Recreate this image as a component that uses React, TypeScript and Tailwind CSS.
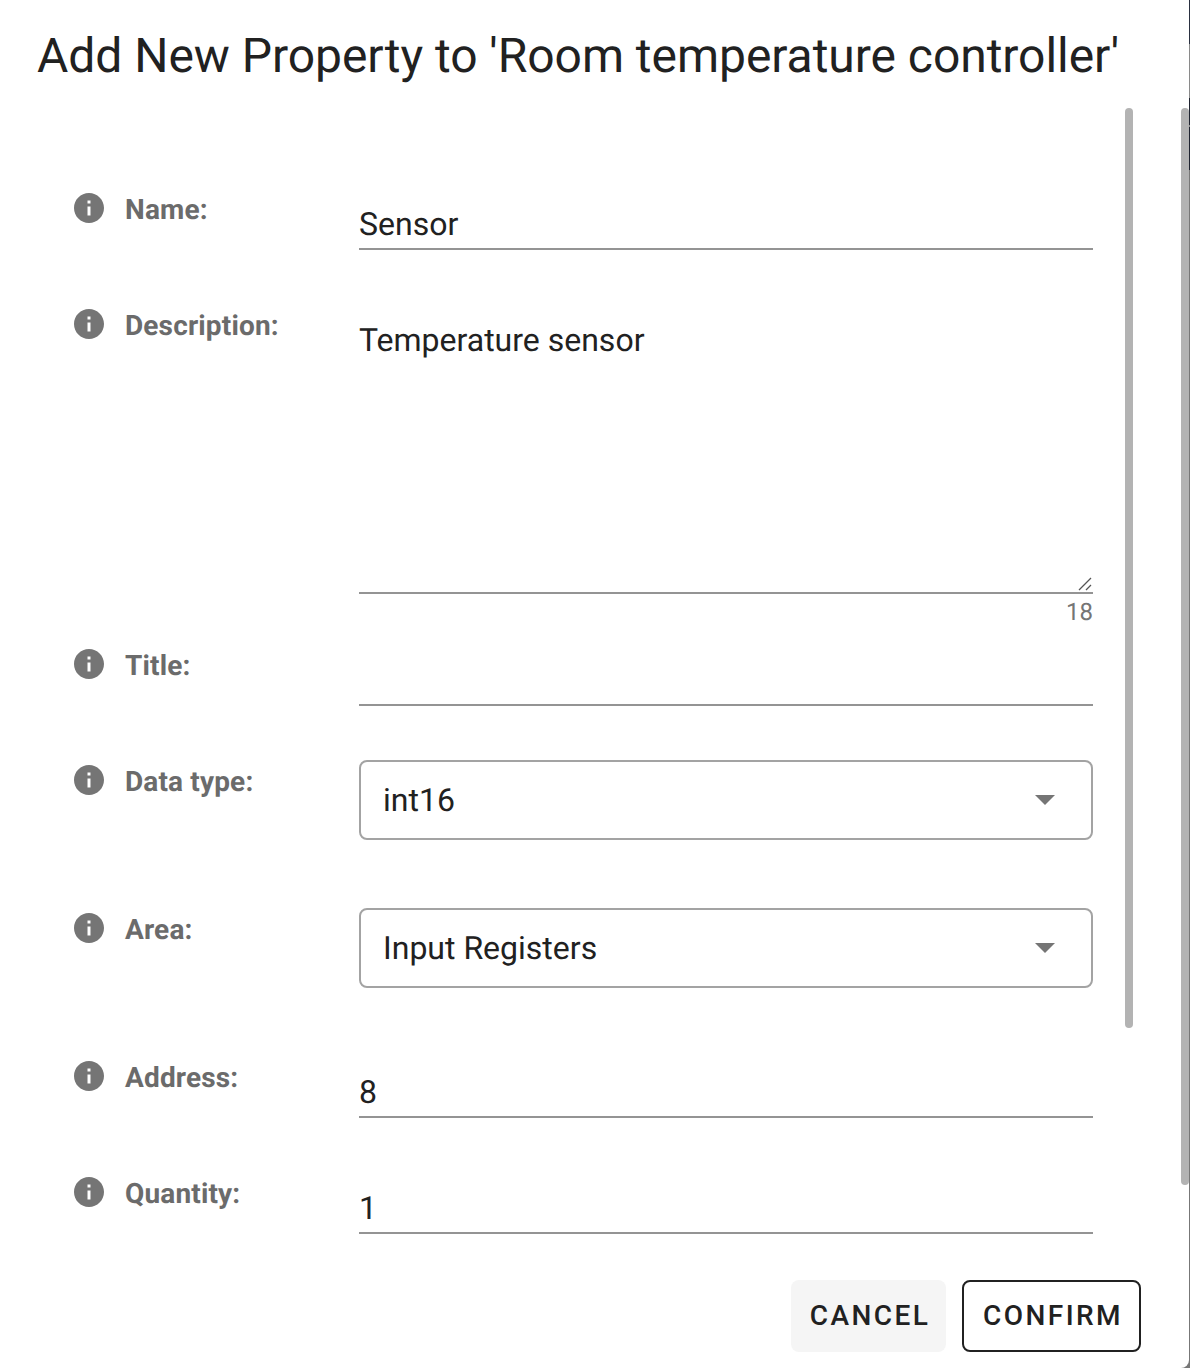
const INFO_PATH =
  'M12 2C6.48 2 2 6.48 2 12s4.48 10 10 10 10-4.48 10-10S17.52 2 12 2zm1 15h-2v-6h2v6zm0-8h-2V7h2v2z'

function InfoIcon() {
  return (
    <svg className="w-9 h-9 shrink-0 fill-[#757575]" viewBox="0 0 24 24" aria-hidden="true">
      <path d={INFO_PATH} />
    </svg>
  )
}

function Label({ text }: { text: string }) {
  return (
    <div className="w-[285px] shrink-0 flex items-start">
      <InfoIcon />
      <span className="ml-[18px] mt-[2px] text-[28px] leading-9 font-bold text-[#6b6b6b] tracking-[0.15px]">{text}</span>
    </div>
  )
}

function TextField({ value }: { value?: string }) {
  return (
    <div className="w-[734px] h-[56px] border-b-2 border-[#949494] flex items-end pb-[4px] text-[32px] leading-[40px] text-[#212121]">
      {value}
    </div>
  )
}

function SelectField({ value }: { value: string }) {
  return (
    <div className="w-[734px] h-[80px] border-2 border-[#a3a3a3] rounded-lg flex items-center justify-between pl-[22px] pr-[36px] text-[32px] text-[#212121]">
      <span>{value}</span>
      <svg className="w-5 h-[10px] fill-[#757575]" viewBox="0 0 20 10" aria-hidden="true">
        <path d="M0 0h20L10 10z" />
      </svg>
    </div>
  )
}

export default function App() {
  return (
    <div className="relative flex w-[1190px] h-[1368px] bg-[#777777] overflow-hidden font-['Roboto',sans-serif] antialiased [text-rendering:geometricPrecision]">
      <div className="w-[1189px] h-[1368px] shrink-0 bg-white rounded-br-lg overflow-hidden">
        <h1 className="pl-[37px] pt-[25px] h-[108px] text-[48px] leading-[62px] font-normal text-[#212121] whitespace-nowrap tracking-[-0.04px]">
          Add New Property to 'Room temperature controller'
        </h1>

        <div className="h-[1156px] overflow-hidden pl-[71px]">
          <div className="flex items-start mt-[82px]">
            <Label text="Name:" />
            <div className="mt-[4px] ml-[3px]">
              <TextField value="Sensor" />
            </div>
          </div>

          <div className="flex items-start mt-[56px]">
            <Label text="Description:" />
            <div className="ml-[3px] mt-[4px] w-[734px]">
              <div className="relative h-[284px] border-b-2 border-[#949494] pt-[10px] text-[32px] leading-[40px] text-[#212121]">
                Temperature sensor
                <svg className="absolute right-[1px] bottom-[1px] w-[14px] h-[14px] stroke-[#555555]" viewBox="0 0 14 14" fill="none" strokeWidth="1.3" aria-hidden="true">
                  <path d="M1 13 13 1M8 13l5-5" />
                </svg>
              </div>
              <div className="h-[32px] pt-[3px] text-right text-[24px] leading-[30px] text-[#757575]">18</div>
            </div>
          </div>

          <div className="flex items-start mt-[20px]">
            <Label text="Title:" />
            <div className="ml-[3px] mt-[4px]">
              <TextField />
            </div>
          </div>

          <div className="flex items-start mt-[56px]">
            <Label text="Data type:" />
            <div className="ml-[3px] -mt-[2px]">
              <SelectField value="int16" />
            </div>
          </div>

          <div className="flex items-start mt-[70px]">
            <Label text="Area:" />
            <div className="ml-[3px] -mt-[2px]">
              <SelectField value="Input Registers" />
            </div>
          </div>

          <div className="flex items-start mt-[70px]">
            <Label text="Address:" />
            <div className="ml-[3px] mt-[4px]">
              <TextField value="8" />
            </div>
          </div>

          <div className="flex items-start mt-[56px]">
            <Label text="Quantity:" />
            <div className="ml-[3px] mt-[4px]">
              <TextField value="1" />
            </div>
          </div>
        </div>

        <div className="flex justify-end gap-4 pt-[16px] pr-[48px]">
          <button className="w-[155px] h-[72px] pl-[3px] rounded-lg bg-[#f5f5f5] text-[28px] font-medium tracking-[2.45px] text-[#212121]">
            CANCEL
          </button>
          <button className="w-[179px] h-[72px] pl-[3px] rounded-lg border-2 border-[#212121] text-[28px] font-medium tracking-[2.45px] text-[#212121]">
            CONFIRM
          </button>
        </div>
      </div>

      {/* sliver of the page behind the dialog */}
      <div className="w-px flex flex-col">
        <div className="h-[44px] bg-[#2a3040]" />
        <div className="h-[54px] bg-[#8a8a8a]" />
        <div className="h-[27px] bg-[#1f2430]" />
        <div className="h-[2px] bg-[#8a8a8a]" />
        <div className="h-[43px] bg-[#1f2430]" />
      </div>

      {/* scrollbars lie over the dialog */}
      <div className="absolute left-[1125px] top-[108px] w-2 h-[920px] rounded bg-[#b3b3b3]" />
      <div className="absolute left-[1181px] top-[108px] w-2 h-[1077px] rounded bg-[#b3b3b3]" />
    </div>
  )
}
